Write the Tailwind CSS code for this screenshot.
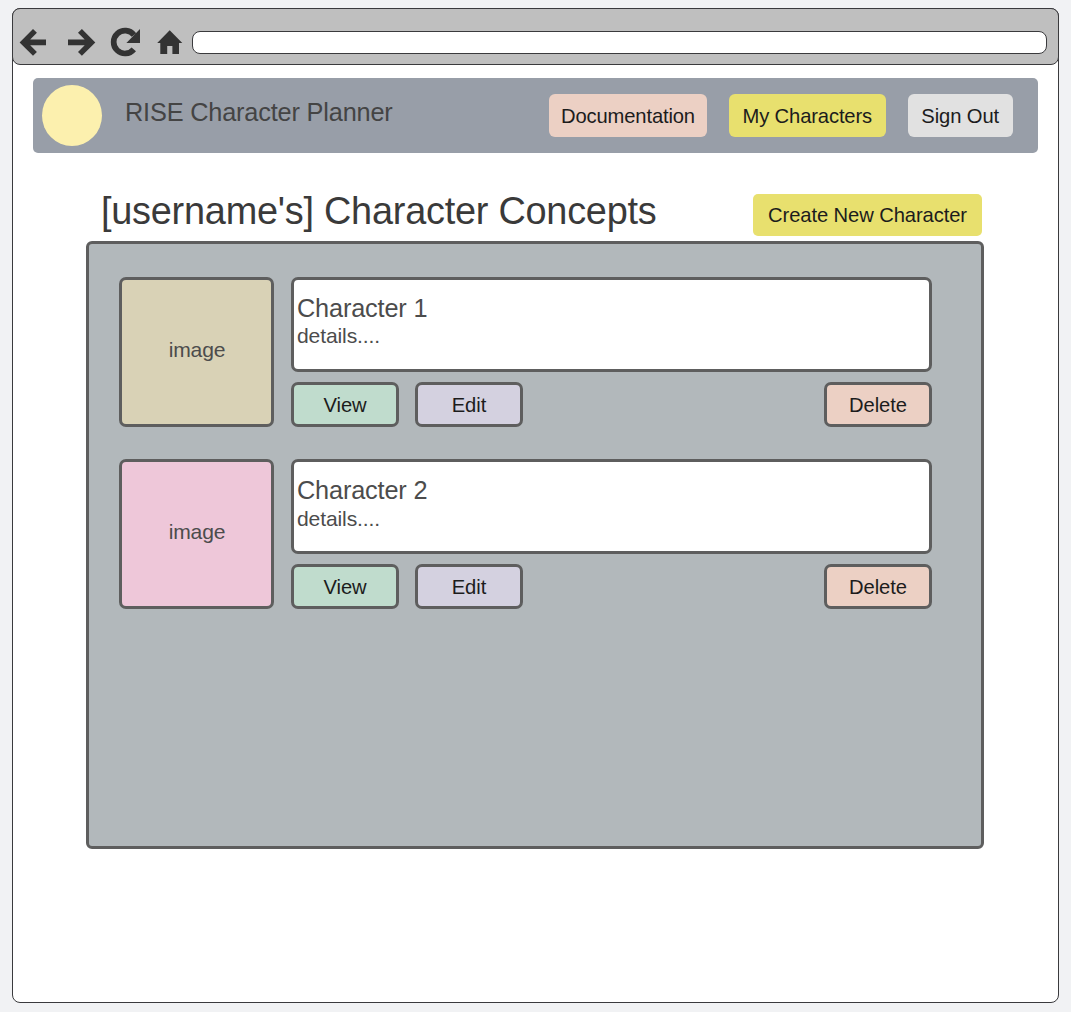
<!DOCTYPE html>
<html lang="en">
<head>
<meta charset="utf-8">
<title>RISE Character Planner</title>
<script src="https://cdn.jsdelivr.net/npm/@tailwindcss/browser@4"></script>
</head>
<body class="h-[1012px] overflow-hidden bg-[#f1f2f4] pt-2 pl-3 font-['Liberation_Sans',Arial,sans-serif]">
<div class="h-[995px] w-[1047px] rounded-lg border border-[#3a3a3d] bg-white">
  <header class="-mx-px -mt-px flex h-[57px] items-start rounded-lg border border-[#3a3a3d] bg-[#bfbfbf]">
    <svg class="mt-2 h-12 w-[179px] shrink-0" viewBox="13 17 179 48" fill="#333">
      <path d="M19.6 42.4 33 29 36.9 32.7 30.2 39.4H46V45.3H30.2L36.9 52 33 55.8Z"/>
      <path d="M95.3 42.4 81.9 29 78 32.7 84.7 39.4H68V45.3H84.7L78 52 81.9 55.8Z"/>
      <path d="M133.8 49.4A11.4 11.4 0 1 1 134 35" fill="none" stroke="#333" stroke-width="5.7"/>
      <path d="M140 29V43H126.4Z"/>
      <path d="M169.7 30.3 182.3 43H179V54H172.4V46H167.2V54H160.3V43H157.2Z"/>
    </svg>
    <div class="mt-[22px] h-[23px] w-[855px] rounded-lg border border-[#3a3a3d] bg-white"></div>
  </header>
  <nav class="mt-[13px] ml-5 flex h-[75px] w-[1005px] items-start rounded-[5px] bg-[#989ea8]">
    <div class="mt-[7px] ml-[9px] h-[61px] w-15 rounded-[50%] bg-[#fcf0ae]"></div>
    <div class="mt-[19px] ml-[23px] w-[424px] text-[25.3px] leading-[30px] tracking-[-0.17px] text-[#444]">RISE Character Planner</div>
    <button class="mt-4 h-[43px] w-[158px] rounded-md bg-[#ecd0c4] pt-0.5 text-[20.2px] tracking-[-0.15px] text-[#1c1c1c]">Documentation</button>
    <button class="mt-4 ml-[21.5px] h-[43px] w-[157.5px] rounded-md bg-[#e8e06e] pt-0.5 text-[20.2px] tracking-[-0.13px] text-[#1c1c1c]">My Characters</button>
    <button class="mt-4 ml-[21.5px] h-[43px] w-[105.5px] rounded-md bg-[#e1e1e1] pt-0.5 text-[20.2px] tracking-[-0.1px] text-[#1c1c1c]">Sign Out</button>
  </nav>
  <main class="mt-[41px] ml-[73px] w-[898px]">
    <div class="flex h-[47px] items-start justify-between pr-0.5 pl-[15px]">
      <h1 class="-mt-[5px] text-[37.9px] leading-[44px] tracking-[-0.25px] whitespace-nowrap text-[#3a3a3a]">[username's] Character Concepts</h1>
      <button class="h-[42px] w-[229px] rounded-[5px] bg-[#e8e06e] pt-px text-[20.2px] tracking-[-0.1px] text-[#1c1c1c]">Create New Character</button>
    </div>
    <div class="flex h-[608px] flex-col gap-8 rounded-md border-3 border-[#5e5e5e] bg-[#b2b8bb] pt-[33px] pl-[30px]">
      <section class="flex h-[150px] gap-[17px]">
        <div class="flex w-[155px] items-center justify-center rounded-[7px] border-3 border-[#5e5e5e] bg-[#d9d2b6] pb-[5px] pl-px text-[21.1px] leading-6 tracking-[-0.15px] text-[#4c4c4c]">image</div>
        <div class="w-[641px]">
          <div class="h-[95px] rounded-[7px] border-3 border-[#5e5e5e] bg-white pt-[13px] pl-[3px] text-[#4c4c4c]">
            <h2 class="text-[25.3px] leading-[30px] tracking-[-0.17px]">Character 1</h2>
            <p class="text-[21.1px] leading-[26px] tracking-[-0.13px]">details....</p>
          </div>
          <div class="mt-2.5 flex h-[45px] gap-4 text-[20.2px] tracking-[-0.05px] text-[#1c1c1c]">
            <button class="w-[108px] rounded-[7px] border-3 border-[#5e5e5e] bg-[#c0dccd] pt-0.5">View</button>
            <button class="w-[108px] rounded-[7px] border-3 border-[#5e5e5e] bg-[#d4d1e0] pt-0.5">Edit</button>
            <button class="ml-auto w-[108px] rounded-[7px] border-3 border-[#5e5e5e] bg-[#ecd0c4] pt-0.5">Delete</button>
          </div>
        </div>
      </section>
      <section class="flex h-[150px] gap-[17px]">
        <div class="flex w-[155px] items-center justify-center rounded-[7px] border-3 border-[#5e5e5e] bg-[#eec7d9] pb-[5px] pl-px text-[21.1px] leading-6 tracking-[-0.15px] text-[#4c4c4c]">image</div>
        <div class="w-[641px]">
          <div class="h-[95px] rounded-[7px] border-3 border-[#5e5e5e] bg-white pt-[13px] pl-[3px] text-[#4c4c4c]">
            <h2 class="text-[25.3px] leading-[30px] tracking-[-0.17px]">Character 2</h2>
            <p class="text-[21.1px] leading-[27px] tracking-[-0.13px]">details....</p>
          </div>
          <div class="mt-2.5 flex h-[45px] gap-4 text-[20.2px] tracking-[-0.05px] text-[#1c1c1c]">
            <button class="w-[108px] rounded-[7px] border-3 border-[#5e5e5e] bg-[#c0dccd] pt-0.5">View</button>
            <button class="w-[108px] rounded-[7px] border-3 border-[#5e5e5e] bg-[#d4d1e0] pt-0.5">Edit</button>
            <button class="ml-auto w-[108px] rounded-[7px] border-3 border-[#5e5e5e] bg-[#ecd0c4] pt-0.5">Delete</button>
          </div>
        </div>
      </section>
    </div>
  </main>
</div>
</body>
</html>
